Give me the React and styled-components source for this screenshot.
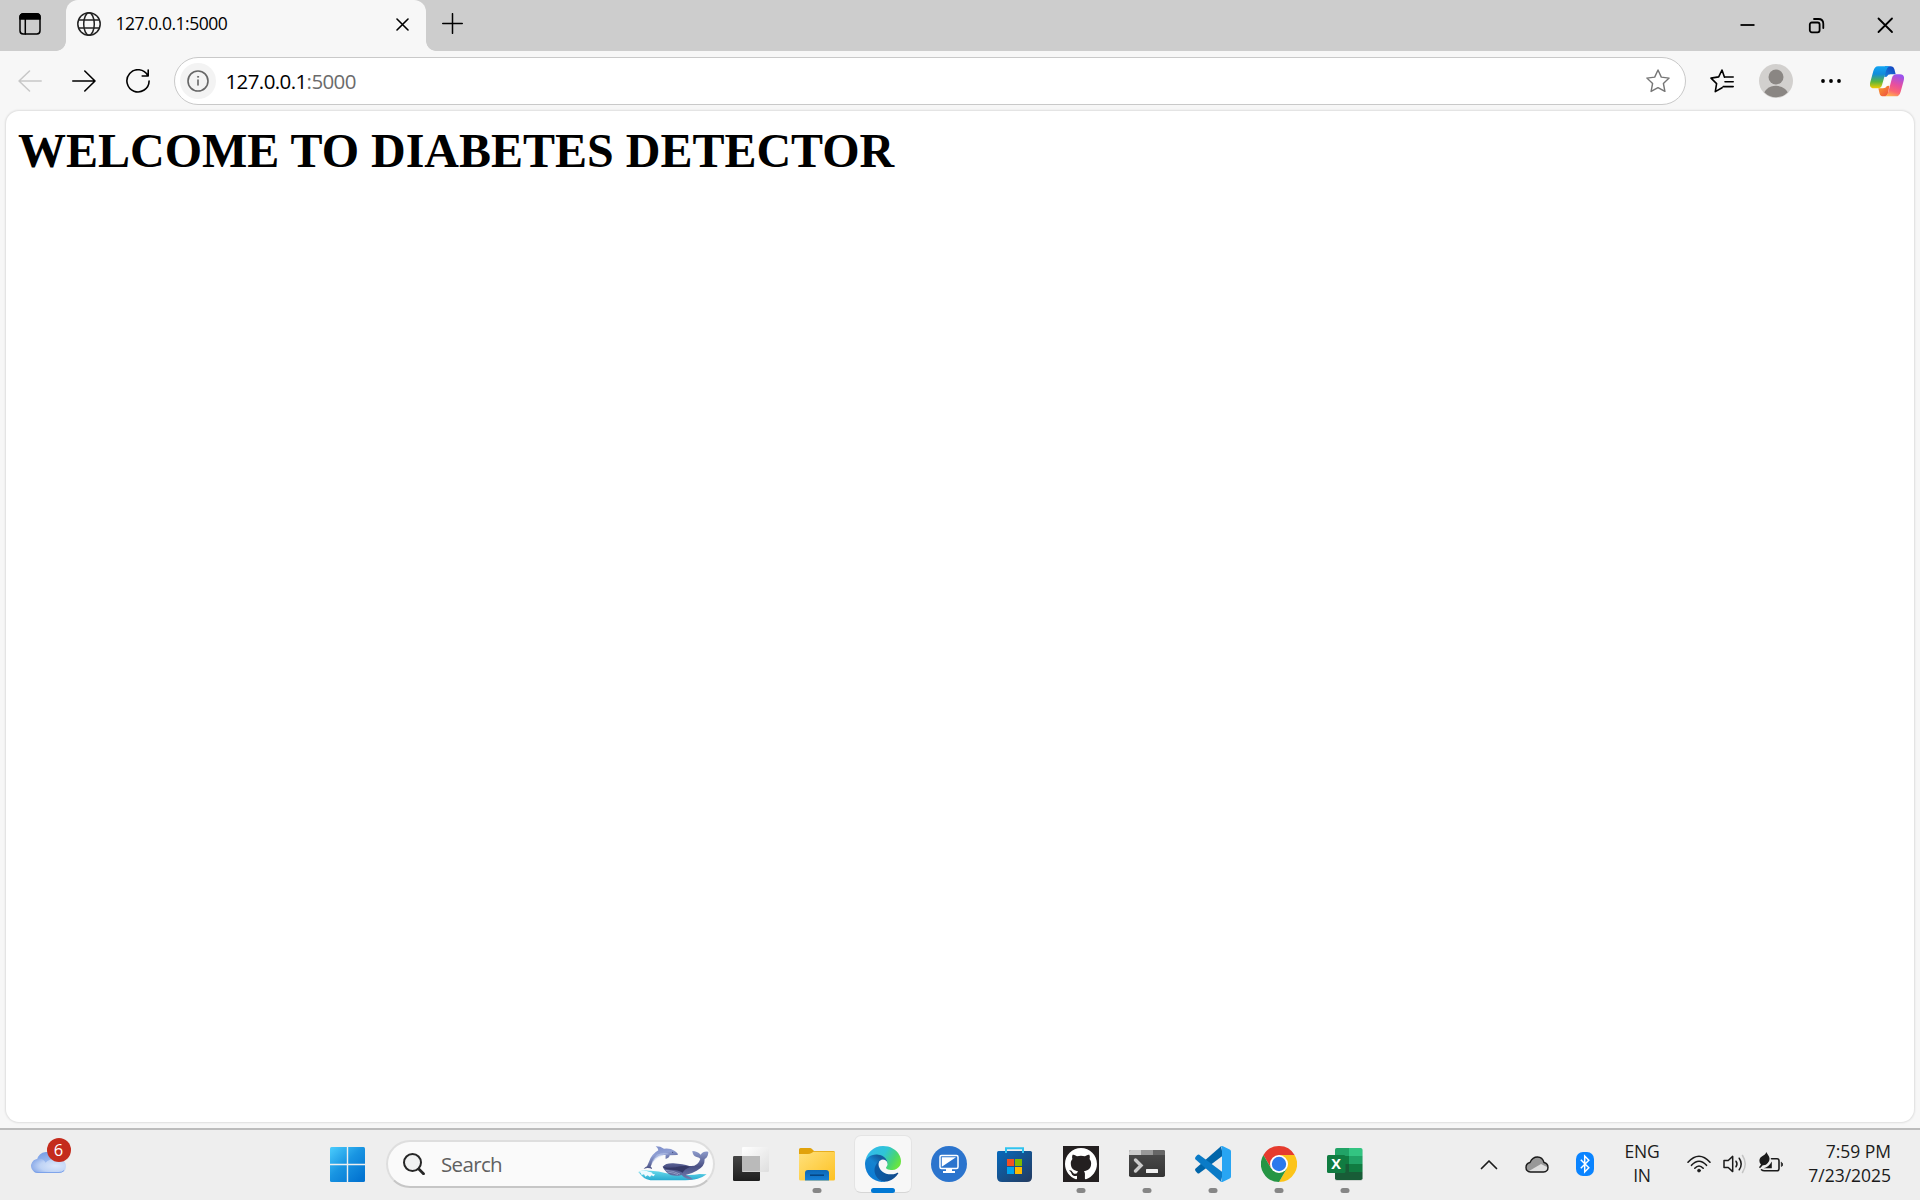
import React from "react";
import styled, { createGlobalStyle } from "styled-components";

const GlobalStyle = createGlobalStyle`
  * { box-sizing: border-box; }
  html, body { margin: 0; padding: 0; background: #f7f7f7; overflow: hidden; }
  svg { display: block; flex: none; }
`;

const Screen = styled.div`
  width: 1920px;
  height: 1200px;
  display: flex;
  flex-direction: column;
  background: #f7f7f7;
  font-family: "Open Sans", "Noto Sans", sans-serif;
  color: #000;
`;

/* ---------- Title bar ---------- */
const TitleBar = styled.header`
  height: 51px;
  flex: none;
  display: flex;
  background: #cdcdcd;
`;

const Workspace = styled.div`
  width: 66px;
  padding: 13px 0 0 19px;
`;

const Tab = styled.div`
  position: relative;
  width: 360px;
  display: flex;
  align-items: flex-start;
  padding: 12px 17px 0 11px;
  background: #f7f7f7;
  border-radius: 12px 12px 0 0;
  &::before, &::after {
    content: "";
    position: absolute;
    bottom: 0;
    width: 10px;
    height: 10px;
  }
  &::before {
    left: -10px;
    background: radial-gradient(circle at 0 0, transparent 9.5px, #f7f7f7 10.2px);
  }
  &::after {
    right: -10px;
    background: radial-gradient(circle at 100% 0, transparent 9.5px, #f7f7f7 10.2px);
  }
`;

const TabTitle = styled.span`
  flex: 1;
  margin: -1px 0 0 14.5px;
  font-size: 17.5px;
  line-height: 24px;
  letter-spacing: -0.47px;
`;

const CloseIcon = styled.div`
  margin-top: 6px;
`;

const NewTab = styled.div`
  padding: 13px 0 0 15.5px;
  flex: 1;
`;

const WindowButtons = styled.div`
  display: flex;
  padding-top: 17px;
  gap: 52px;
  margin-right: 26px;
`;

/* ---------- Toolbar ---------- */
const Toolbar = styled.nav`
  height: 60px;
  flex: none;
  display: flex;
  align-items: center;
  padding: 0 16px 0 18px;
`;

const NavButtons = styled.div`
  display: flex;
  gap: 30px;
  width: 156px;
`;

const AddressBar = styled.div`
  width: 1512px;
  height: 48px;
  display: flex;
  align-items: center;
  padding: 0 15px 0 5px;
  background: #fff;
  border: 1px solid #c9c9c9;
  border-radius: 24px;
`;

const InfoBadge = styled.div`
  width: 36px;
  height: 36px;
  display: flex;
  align-items: center;
  justify-content: center;
  border-radius: 50%;
  background: #f3f3f3;
`;

const Url = styled.span`
  flex: 1;
  margin-left: 9.5px;
  font-size: 20.5px;
  line-height: 28px;
  letter-spacing: -0.6px;
`;

const Port = styled.span`
  color: #6b6b6b;
`;

const ToolbarActions = styled.div`
  display: flex;
  align-items: center;
  margin-left: 24px;
  & > :nth-child(2) { margin-left: 25px; }
  & > :nth-child(3) { margin-left: 28px; }
  & > :nth-child(4) { margin-left: 29px; }
`;

/* ---------- Page ---------- */
const PageFrame = styled.div`
  height: 1017px;
  flex: none;
  padding: 0 6px 5px;
`;

const Page = styled.main`
  height: 1011px;
  padding: 12px;
  background: #fff;
  border-radius: 13px;
  box-shadow: 0 0 2px 1px rgba(0, 0, 0, 0.1);
`;

const Heading = styled.h1`
  margin: 0;
  font: bold 48px/55px "Liberation Serif", "Times New Roman", serif;
`;

/* ---------- Taskbar ---------- */
const Taskbar = styled.footer`
  height: 72px;
  flex: none;
  display: flex;
  background: #eee;
  box-shadow: inset 0 2px 0 #bcbcbc;
`;

const WeatherArea = styled.div`
  position: relative;
  width: 314px;
  padding: 21.5px 0 0 30px;
`;

const Badge = styled.span`
  position: absolute;
  left: 46.5px;
  top: 10px;
  width: 24px;
  height: 24px;
  border-radius: 50%;
  background: #c42b1c;
  color: #fff;
  font-size: 16.5px;
  line-height: 24px;
  text-align: center;
`;

const Slot = styled.div`
  position: relative;
  width: ${(p) => p.$width || 66}px;
  height: 72px;
  flex: none;
  display: flex;
  align-items: center;
  justify-content: center;
  &::after {
    content: "";
    display: ${(p) => (p.$mark ? "block" : "none")};
    position: absolute;
    bottom: 7px;
    left: 50%;
    width: ${(p) => (p.$mark === "active" ? 24 : 9)}px;
    height: 5px;
    transform: translateX(-50%);
    border-radius: 3px;
    background: ${(p) => (p.$mark === "active" ? "#0078d4" : "#868686")};
  }
`;

const ActiveTile = styled.div`
  width: 58px;
  height: 58px;
  display: flex;
  align-items: center;
  justify-content: center;
  background: #f7f7f7;
  border: 1px solid #e4e4e4;
  border-bottom-color: #d6d6d6;
  border-radius: 7px;
`;

const SearchBox = styled.div`
  width: 329px;
  height: 48px;
  margin: 12px 3.5px 0 5.5px;
  display: flex;
  align-items: center;
  padding: 0 3px 0 15.5px;
  background: #fafafa;
  border: 2px solid #dedede;
  border-bottom-color: #c6c6c6;
  border-radius: 24px;
`;

const SearchLabel = styled.span`
  flex: 1;
  margin-left: 16px;
  color: #606060;
  font-size: 20.5px;
  line-height: 28px;
  letter-spacing: -0.65px;
`;

const Spacer = styled.div`
  flex: 1;
`;

const TrayText = styled.div`
  padding-bottom: 1px;
  color: #1b1b1b;
  font-size: 17.5px;
  line-height: 23.5px;
  letter-spacing: ${(p) => p.$tracking}px;
  text-align: ${(p) => p.$align || "center"};
`;

const Status = styled.div`
  display: flex;
  align-items: center;
  gap: 12px;
  padding-left: 12px;
`;

const Clock = styled.div`
  width: 137px;
  display: flex;
  align-items: center;
  justify-content: flex-end;
  padding-right: 29px;
`;

/* ---------- Icons ---------- */
const Icon = ({ w = 24, h = w, box, sw = 1.7, color = "#111", children }) => (
  <svg width={w} height={h} viewBox={box || `0 0 ${w} ${h}`} fill="none" stroke={color}
    strokeWidth={sw} strokeLinecap="round" strokeLinejoin="round">
    {children}
  </svg>
);

const WorkspaceIcon = () => (
  <Icon w={22} color="#000" sw={1.5}>
    <rect x="1" y="1" width="20" height="20" rx="3.2" />
    <path d="M1 6V4a3.2 3.2 0 0 1 3.2-3.2h13.6A3.2 3.2 0 0 1 21 4v2z" fill="#000" />
    <path d="M6.3 6v15" />
  </Icon>
);

const GlobeIcon = () => (
  <Icon sw={1.5} color="#222">
    <circle cx="12" cy="12" r="11.2" />
    <ellipse cx="12" cy="12" rx="5.3" ry="11.2" />
    <path d="M2 8h20M2 16h20" />
  </Icon>
);

const BackIcon = () => (
  <Icon color="#c7c7c7" sw={1.5}><path d="M23.2 12H1M11.5 2L1 12l10.5 10" /></Icon>
);
const ForwardIcon = () => (
  <Icon color="#000" sw={1.6}><path d="M.8 12H23M12.8 2L23 12 12.8 22" /></Icon>
);
const ReloadIcon = () => (
  <Icon color="#000" sw={1.6}><path d="M21.8 6.6A11.1 11.1 0 1 0 23.1 12M22.2 1v6h-6" /></Icon>
);

const InfoIcon = () => (
  <Icon w={22} color="#666" sw={1.6}>
    <circle cx="11" cy="11" r="10" />
    <path d="M11 10v5" />
    <circle cx="11" cy="6.8" r=".6" fill="#666" strokeWidth=".8" />
  </Icon>
);

const StarIcon = () => (
  <Icon color="#767676" sw={1.4}>
    <path d="M12 1l3.3 7.1 7.8 1-5.7 5.4 1.5 7.9L12 18.6l-6.9 3.8 1.5-7.9L.9 9.1l7.8-1z" />
  </Icon>
);

const FavoritesIcon = () => (
  <Icon color="#000" sw={1.6}>
    <path d="M15 8.1h-.6L12 1 8.7 7.9 1 9.1l5.6 5.5L5.3 22.6l6.8-3.9M15 8h8.2M15 12.8h8.2M13.2 17.6h10" />
  </Icon>
);

const AvatarIcon = () => (
  <svg width="34" height="34" viewBox="0 0 34 34">
    <defs><clipPath id="avatarClip"><circle cx="17" cy="17" r="16.2" /></clipPath></defs>
    <circle cx="17" cy="17" r="17" fill="#d2d0ce" />
    <g fill="#8a8683" clipPath="url(#avatarClip)">
      <circle cx="17" cy="13" r="7.5" />
      <ellipse cx="17" cy="33" rx="12.8" ry="11.2" />
    </g>
  </svg>
);

const DotsIcon = () => (
  <svg width="20" height="4" viewBox="0 0 20 4">
    <circle cx="2" cy="2" r="1.9" /><circle cx="10" cy="2" r="1.9" /><circle cx="18" cy="2" r="1.9" />
  </svg>
);

const CopilotIcon = () => (
  <svg width="34" height="31" viewBox="30 29 102 93">
    <defs>
      <linearGradient id="cpLeft" x1="0" y1="0" x2="0" y2="1">
        <stop offset="0" stopColor="#12a5f3" /><stop offset=".35" stopColor="#118cdb" />
        <stop offset=".7" stopColor="#5cb63c" /><stop offset="1" stopColor="#f5cb00" />
      </linearGradient>
      <linearGradient id="cpRight" x1=".6" y1="0" x2=".3" y2="1">
        <stop offset="0" stopColor="#9a52ee" /><stop offset=".45" stopColor="#e84f9e" />
        <stop offset=".75" stopColor="#fb6672" /><stop offset="1" stopColor="#ffb04e" />
      </linearGradient>
      <linearGradient id="cpTop" x1="0" y1="1" x2="1" y2="0">
        <stop offset="0" stopColor="#1685dc" /><stop offset="1" stopColor="#143dbe" />
      </linearGradient>
      <linearGradient id="cpBottom" x1="0" y1="0" x2="1" y2="1">
        <stop offset="0" stopColor="#f9a02b" /><stop offset="1" stopColor="#ee4a43" />
      </linearGradient>
    </defs>
    <path d="M76 54L79 63 66 96H78L85 85 97 54Z" fill="#fbfbfb" />
    <path d="M75 30H93Q101 30 103 38L107 54H92Q84 54 80 61L73 62Z" fill="url(#cpTop)" />
    <path d="M55 96H69Q77 96 81 89L88 88 84 113Q81 120 75 120H70Q61 120 59 112Z" fill="url(#cpBottom)" />
    <path d="M54 30H88Q81 33 78 44L66 86Q63 96 54 96H42Q26 96 31 77L40 44Q44 30 54 30Z" fill="url(#cpLeft)" />
    <path d="M108 120H75Q82 117 85 106L96 65Q99 54 109 54H120Q136 55 131 73L122 106Q118 120 108 120Z" fill="url(#cpRight)" />
  </svg>
);

const CloudIcon = () => (
  <svg width="36" height="23" viewBox="0 0 36 23">
    <defs>
      <linearGradient id="cloudBack" x1="0" y1="0" x2=".4" y2="1">
        <stop offset="0" stopColor="#7099e5" /><stop offset="1" stopColor="#c3d8f8" />
      </linearGradient>
      <radialGradient id="cloudFront" cx=".7" cy=".5" r=".8">
        <stop offset="0" stopColor="#dbe8fb" /><stop offset=".55" stopColor="#bfd3f5" /><stop offset="1" stopColor="#7c9fe5" />
      </radialGradient>
    </defs>
    <path d="M7 10a10 10 0 0 1 19-2 7.5 7.5 0 0 1 3 15H13z" fill="url(#cloudBack)" />
    <path d="M8 23a7 7 0 0 1-2-13.7c5-1.3 8 .2 9.5 3.4C18 10 22 8.5 28 8.8c4.5.5 8 3 8 7.2 0 5-3 7-7 7z" fill="url(#cloudFront)" />
    <path d="M4 21.5Q6 22.5 8 22.5h21q3 0 5-2" fill="none" stroke="#789fe9" strokeWidth=".9" />
  </svg>
);

const WindowsIcon = () => (
  <svg width="35" height="35" viewBox="0 0 35 35">
    <defs>
      <linearGradient id="win" gradientUnits="userSpaceOnUse" x1="0" y1="0" x2="30" y2="33">
        <stop offset="0" stopColor="#4bcdfd" /><stop offset=".5" stopColor="#1995e2" /><stop offset="1" stopColor="#0374d1" />
      </linearGradient>
    </defs>
    <g fill="url(#win)">
      <path d="M1.5 0H16.8V16.8H0V1.5Q0 0 1.5 0z" /><path d="M18.2 0H33.5Q35 0 35 1.5V16.8H18.2z" />
      <path d="M0 18.2H16.8V35H1.5Q0 35 0 33.5z" /><path d="M18.2 18.2H35V33.5Q35 35 33.5 35H18.2z" />
    </g>
  </svg>
);

const SearchIcon = () => (
  <svg width="22" height="22" viewBox="0 0 22 22" fill="none" stroke="#262626">
    <circle cx="9.5" cy="9.5" r="8.5" strokeWidth="2" fill="#f0f1f1" />
    <path d="M15.8 16l4.7 4.7" strokeWidth="2.8" strokeLinecap="round" />
  </svg>
);

const DolphinArt = () => (
  <svg width="72" height="38" viewBox="20 26 216 114">
    <defs>
      <linearGradient id="dolphin" x1="0" y1="0" x2=".4" y2="1">
        <stop offset="0" stopColor="#7585c4" /><stop offset=".45" stopColor="#8f9fd4" /><stop offset="1" stopColor="#3b3f71" />
      </linearGradient>
      <linearGradient id="whale" x1="0" y1="0" x2="0" y2="1">
        <stop offset="0" stopColor="#8f9dcd" /><stop offset=".55" stopColor="#4b5185" /><stop offset="1" stopColor="#717eb2" />
      </linearGradient>
      <linearGradient id="sea" x1="0" y1="0" x2="0" y2="1">
        <stop offset="0" stopColor="#6bdcec" /><stop offset="1" stopColor="#27a9cf" />
      </linearGradient>
    </defs>
    <path d="M21 107Q35 99 53 103Q80 102 105 111L158 115Q180 117 205 113L226 114Q215 123 199 127Q180 132 145 132H70Q42 132 31 118Z" fill="url(#sea)" />
    <path d="M22 107Q36 99 52 106L60 108 65 113 71 114 67 120 60 117 56 122 49 117 42 121 38 114 31 116 28 109Z" fill="#edfaff" />
    <path d="M47 90Q41 92 37 98Q45 95 49 95Q57 95 62 98Q63 94 58 91Q61 78 72 66Q84 54 103 56Q102 63 103 68L111 64Q115 61 115 57L138 56Q142 55 138 51Q135 46 129 43Q118 35 98 37Q88 30 73 30Q80 34 81 42Q60 54 53 76Z" fill="url(#dolphin)" />
    <path d="M77 55Q98 46 116 54Q101 53 86 61Q68 69 60 86Q60 72 77 55Z" fill="#c6d3f3" opacity=".5" />
    <circle cx="124" cy="48" r="1.5" fill="#232b55" />
    <path d="M94 91Q103 80 126 81Q155 83 174 89Q199 92 207 68Q205 63 196 62Q184 59 183 44Q198 44 208 55Q216 43 231 46Q231 63 220 68Q221 91 196 103Q183 111 163 116Q179 122 185 129Q166 132 151 116Q122 124 105 107Q97 99 94 91Z" fill="url(#whale)" />
    <path d="M94 91Q119 97 147 90Q163 87 177 91Q158 99 154 109Q140 100 119 100Q104 101 94 91Z" fill="#343866" />
    <path d="M103 102Q125 103 146 113M108 107Q126 109 140 115" stroke="#a6b2d4" strokeWidth="2" fill="none" />
  </svg>
);

const TaskViewIcon = () => (
  <svg width="36" height="36" viewBox="0 0 36 36">
    <defs>
      <linearGradient id="tvDark" x1="0" y1="0" x2="0" y2="1"><stop offset="0" stopColor="#454545" /><stop offset="1" stopColor="#1e1e1e" /></linearGradient>
      <linearGradient id="tvLight" x1="0" y1="0" x2="1" y2="1"><stop offset="0" stopColor="#fff" /><stop offset="1" stopColor="#dedede" /></linearGradient>
    </defs>
    <rect x="0" y="10" width="27" height="25" rx="1.3" fill="url(#tvDark)" />
    <rect x="9" y="1" width="27" height="25" rx="1.3" fill="url(#tvLight)" />
    <rect x="9" y="10" width="18" height="15.5" fill="#bababa" />
  </svg>
);

const FolderIcon = () => (
  <svg width="36" height="36" viewBox="0 0 36 36">
    <defs>
      <linearGradient id="folder" x1="0" y1="0" x2="1" y2="1"><stop offset="0" stopColor="#ffe17c" /><stop offset="1" stopColor="#fdc122" /></linearGradient>
      <linearGradient id="folderTray" x1="0" y1="0" x2="0" y2="1"><stop offset="0" stopColor="#0d67b5" /><stop offset="1" stopColor="#1681d8" /></linearGradient>
    </defs>
    <path d="M0 3.5Q0 2 1.5 2H11Q12 2 13 3L15 5H34.5Q36 5 36 6.5V12H0z" fill="#e1a20b" />
    <path d="M0 8H9Q11 8 12.5 7L14.5 5.7H35Q36 5.7 36 7V33Q36 34.5 34.5 34.5H1.5Q0 34.5 0 33z" fill="url(#folder)" />
    <path d="M6 34.5V27Q6 24 9 24H27Q30 24 30 27V34.5z" fill="url(#folderTray)" />
    <path d="M11 29.2H25" stroke="#07437f" strokeWidth="1.5" />
  </svg>
);

const EdgeIcon = () => (
  <svg width="36" height="36" viewBox="0 0 256 256">
    <defs>
      <linearGradient id="edgeDark" x1=".2" y1=".5" x2="1" y2=".5"><stop offset="0" stopColor="#0c59a4" /><stop offset="1" stopColor="#114a8b" /></linearGradient>
      <linearGradient id="edgeBlue" x1=".7" y1=".2" x2=".2" y2="1"><stop offset="0" stopColor="#145c9e" /><stop offset=".3" stopColor="#1583d0" /><stop offset="1" stopColor="#0a78d4" /></linearGradient>
      <linearGradient id="edgeGreen" x1="0" y1=".2" x2="1" y2=".6"><stop offset="0" stopColor="#35b9ef" /><stop offset=".5" stopColor="#2fc4d6" /><stop offset=".8" stopColor="#48d572" /><stop offset="1" stopColor="#69e53f" /></linearGradient>
    </defs>
    <path fill="url(#edgeDark)" d="M231 190.5a93.7 93.7 0 0 1-10.5 4.7 101.9 101.9 0 0 1-35.9 6.5c-47.3 0-88.5-32.6-88.5-74.3A31.5 31.5 0 0 1 112.5 100c-42.8 1.8-53.8 46.4-53.8 72.5 0 73.9 68.1 81.4 82.8 81.4 7.9 0 19.8-2.3 27-4.6l1.3-.4a128.3 128.3 0 0 0 66.6-52.8 4 4 0 0 0-5.4-5.6z" />
    <path fill="url(#edgeBlue)" d="M105.7 241.4a79.2 79.2 0 0 1-22.7-21.3 80.7 80.7 0 0 1 29.5-120c3.1-1.5 8.5-4.1 15.5-4a32.4 32.4 0 0 1 25.7 13 31.9 31.9 0 0 1 6.3 18.7c0-.2 24.5-79.6-80-79.6-43.9 0-80 41.6-80 78.2a130.2 130.2 0 0 0 12.1 56 128 128 0 0 0 156.4 67 75.5 75.5 0 0 1-62.8-8z" />
    <path fill="url(#edgeGreen)" d="M152.3 148.9c-.8 1-3.3 2.5-3.3 5.6 0 2.6 1.7 5.1 4.7 7.2 14.4 10 41.5 8.7 41.6 8.7a59.6 59.6 0 0 0 30.3-8.4A61.4 61.4 0 0 0 256 109.1c.3-22.4-8-37.3-11.3-43.9C223.5 23.8 177.7 0 128 0A128 128 0 0 0 0 126.2c.5-36.5 36.8-66 80-66 3.5 0 23.5.3 42 10 16.3 8.6 24.9 18.9 30.9 29.2 6.2 10.7 7.3 24.1 7.3 29.5s-2.7 13.4-7.9 20z" />
  </svg>
);

const RemoteIcon = () => (
  <svg width="36" height="36" viewBox="0 0 36 36">
    <circle cx="18" cy="18" r="18" fill="#2b74cd" />
    <rect x="9" y="9.5" width="18" height="13" rx="1.5" fill="none" stroke="#fff" strokeWidth="1.5" />
    <path d="M10.8 11.3H25L10.8 20.8zM15 22.5h6v2.5h3v2H12v-2h3z" fill="#fff" />
  </svg>
);

const StoreIcon = () => (
  <svg width="36" height="36" viewBox="0 0 36 36">
    <defs><linearGradient id="store" x1="0" y1="0" x2="1" y2="1"><stop offset="0" stopColor="#0669bc" /><stop offset="1" stopColor="#243a5f" /></linearGradient></defs>
    <path d="M0 6.5Q0 5 1.5 5H33.5Q35 5 35 6.5V31Q35 36 30 36H5Q0 36 0 31z" fill="url(#store)" />
    <path d="M9 7V2.3H26V7" fill="none" stroke="#30c3ef" strokeWidth="2" />
    <rect x="10" y="13" width="7" height="7" fill="#f25022" /><rect x="18" y="13" width="7" height="7" fill="#7fba00" />
    <rect x="10" y="21" width="7" height="7" fill="#00a4ef" /><rect x="18" y="21" width="7" height="7" fill="#ffb900" />
  </svg>
);

const GitHubIcon = () => (
  <svg width="36" height="36" viewBox="0 0 36 36">
    <rect width="36" height="36" fill="#231f20" />
    <path transform="translate(2 1.7) scale(1.333)" fill="#fff" d="M12 .297c-6.63 0-12 5.373-12 12 0 5.303 3.438 9.8 8.205 11.385.6.113.82-.258.82-.577 0-.285-.01-1.04-.015-2.04-3.338.724-4.042-1.61-4.042-1.61C4.422 18.07 3.633 17.7 3.633 17.7c-1.087-.744.084-.729.084-.729 1.205.084 1.838 1.236 1.838 1.236 1.07 1.835 2.809 1.305 3.495.998.108-.776.417-1.305.76-1.605-2.665-.3-5.466-1.332-5.466-5.93 0-1.31.465-2.38 1.235-3.22-.135-.303-.54-1.523.105-3.176 0 0 1.005-.322 3.3 1.23.96-.267 1.98-.399 3-.405 1.02.006 2.04.138 3 .405 2.28-1.552 3.285-1.23 3.285-1.23.645 1.653.24 2.873.12 3.176.765.84 1.23 1.91 1.23 3.22 0 4.61-2.805 5.625-5.475 5.92.42.36.81 1.096.81 2.22 0 1.606-.015 2.896-.015 3.286 0 .315.21.69.825.57C20.565 22.092 24 17.592 24 12.297c0-6.627-5.373-12-12-12" />
  </svg>
);

const TerminalIcon = () => (
  <svg width="36" height="36" viewBox="0 0 36 36">
    <defs>
      <clipPath id="termClip"><rect y="4" width="36" height="27" rx="1.8" /></clipPath>
      <linearGradient id="term" x1="0" y1="0" x2="0" y2="1"><stop offset="0" stopColor="#4d4d4d" /><stop offset="1" stopColor="#343434" /></linearGradient>
    </defs>
    <g clipPath="url(#termClip)">
      <rect y="4" width="36" height="27" fill="url(#term)" />
      <rect y="4" width="12" height="5" fill="#ccc" /><rect x="12" y="4" width="12" height="5" fill="#999" /><rect x="24" y="4" width="12" height="5" fill="#666" />
    </g>
    <path d="M6.5 14l5.5 5.5-5.5 5.5" fill="none" stroke="#ccc" strokeWidth="3.4" strokeLinecap="round" />
    <rect x="17" y="23" width="12" height="4" rx=".6" fill="#f0f0f0" />
  </svg>
);

const CodeIcon = () => (
  <svg width="36" height="36" viewBox="0 0 36 36">
    <path d="M.6 22.5L26 .3 28 9.5 4.3 27.3Q3.3 28 2.3 27L.5 25Q-.4 23.6.6 22.5z" fill="#0065a9" />
    <path d="M.6 13.5L26 35.7 28 26.5 4.3 8.7Q3.3 8 2.3 9L.5 11Q-.4 12.4.6 13.5z" fill="#0a7bc7" />
    <path d="M25.5.8Q26.5-.3 28 .3L34.7 3.5Q36 4.2 36 5.6V30.4Q36 31.8 34.7 32.5L28 35.7Q26.5 36.3 25.5 35.2Q27 35.5 27 33.5V2.5Q27 .6 25.5.8z" fill="#28a5f3" />
  </svg>
);

const ChromeIcon = () => (
  <svg width="36" height="36" viewBox="0 0 36 36">
    <path d="M2.41 9A18 18 0 0 1 33.59 9H18L10.21 22.5z" fill="#e53b2e" />
    <path d="M33.59 9A18 18 0 0 1 18 36L25.79 22.5 18 9z" fill="#fcc419" />
    <path d="M18 36A18 18 0 0 1 2.41 9L10.21 22.5H25.79z" fill="#259544" />
    <circle cx="18" cy="18" r="9" fill="#fff" /><circle cx="18" cy="18" r="7.2" fill="#2b79ed" />
  </svg>
);

const ExcelIcon = () => (
  <svg width="36" height="36" viewBox="0 0 36 36">
    <defs><clipPath id="xlClip"><rect x="8" y="2" width="27.5" height="32" rx="1.8" /></clipPath></defs>
    <rect x="8" y="3" width="27.5" height="32" rx="1.8" fill="#cfd4d1" />
    <g clipPath="url(#xlClip)">
      <rect x="8" y="2" width="14" height="8" fill="#21a366" /><rect x="22" y="2" width="14" height="8" fill="#33c481" />
      <rect x="8" y="10" width="14" height="8" fill="#107c41" /><rect x="22" y="10" width="14" height="8" fill="#21a366" />
      <rect x="8" y="18" width="14" height="16" fill="#185c37" /><rect x="22" y="18" width="14" height="8" fill="#107c41" />
      <rect x="22" y="26" width="14" height="8" fill="#185c37" />
    </g>
    <rect x="0" y="9" width="18.5" height="18" rx="1.6" fill="#107c41" />
    <text x="9.2" y="23.2" fill="#fff" textAnchor="middle" fontFamily="Open Sans, sans-serif" fontWeight="700" fontSize="14.5">X</text>
  </svg>
);

const OneDriveIcon = () => (
  <svg width="24" height="17" viewBox="0 0 24 17">
    <path d="M5.5 16Q1 15.5 1 11.5 1 7.5 5 6.5 7.5 1 12.5 1T19 6.5Q23 7.5 23 11.5T18.5 16z" fill="#989898" />
    <path d="M4 15l12-7 6 3 1 3-3 2H5.5z" fill="#dedede" />
    <path d="M5.5 16Q1 15.5 1 11.5 1 7.5 5 6.5 7.5 1 12.5 1T19 6.5Q23 7.5 23 11.5T18.5 16z" fill="none" stroke="#191919" strokeWidth="1.4" />
  </svg>
);

const BluetoothIcon = () => (
  <svg width="18" height="24" viewBox="0 0 18 24">
    <rect width="18" height="24" rx="7" fill="#0a84ff" />
    <path d="M4.8 7.7l8 8L8.7 20V4l4.1 4.2-8 8" fill="none" stroke="#fff" strokeWidth="1.5" />
  </svg>
);

const WifiIcon = () => (
  <Icon w={24} h={18} color="#1b1b1b" sw={1.6}>
    <path d="M1 7.2Q12-4.6 23 7.2M4.5 10.3Q12 2.3 19.5 10.3M7.8 13.2Q12 8.7 16.2 13.2" />
    <circle cx="12" cy="15.6" r="1.5" fill="#1b1b1b" strokeWidth=".6" />
  </Icon>
);

const SpeakerIcon = () => (
  <Icon w={24} h={20} color="#1b1b1b" sw={1.5}>
    <path d="M1 6.5h4.2L9.7 2.4v15.2L5.2 13.5H1zM13 7.2q2 2.8 0 5.6M16.2 4.2q4 5.8 0 11.6" />
    <path d="M19.5 1.5q5.5 8.5 0 17" stroke="#c4c4c4" />
  </Icon>
);

const BatteryIcon = () => (
  <Icon w={24} h={24} color="#1b1b1b" sw={1.6}>
    <path d="M12.500 6.800h5.500q2 0 2 2v8q0 2-2 2H5.500q-2 0-3-1" />
    <path d="M22.300 10.500v4q1.500-.3 1.500-2t-1.500-2z" fill="#1b1b1b" strokeWidth=".6" />
    <path d="M7.200 0Q8.500 2 10 4.500 11.500 8 8.800 11 7 13.500 3.800 13.200L1 16.200 0 15.200 2 12.500Q-1 9 1.500 5.500 3.500 3.800 5.500 2.800 7 1.800 7.200 0z" fill="#1b1b1b" stroke="none" />
    <path d="M4.500 16.200Q9.500 15.500 12.800 9.500V16.200z" fill="#1b1b1b" stroke="none" />
  </Icon>
);

const apps = [
  { key: "taskview", icon: <TaskViewIcon /> },
  { key: "files", icon: <FolderIcon />, mark: "open" },
  { key: "edge", icon: <ActiveTile><EdgeIcon /></ActiveTile>, mark: "active" },
  { key: "remote", icon: <RemoteIcon /> },
  { key: "store", icon: <StoreIcon /> },
  { key: "github", icon: <GitHubIcon />, mark: "open" },
  { key: "terminal", icon: <TerminalIcon />, mark: "open" },
  { key: "code", icon: <CodeIcon />, mark: "open" },
  { key: "chrome", icon: <ChromeIcon />, mark: "open" },
  { key: "excel", icon: <ExcelIcon />, mark: "open" },
];

export default function App() {
  return (
    <Screen>
      <GlobalStyle />
      <TitleBar>
        <Workspace><WorkspaceIcon /></Workspace>
        <Tab>
          <GlobeIcon />
          <TabTitle>127.0.0.1:5000</TabTitle>
          <CloseIcon><Icon w={13} color="#000" sw={1.6}><path d="M1 1l11 11M12 1L1 12" /></Icon></CloseIcon>
        </Tab>
        <NewTab><Icon w={21} color="#000" sw={1.5}><path d="M10.5.7v19.6M.7 10.5h19.6" /></Icon></NewTab>
        <WindowButtons>
          <Icon w={17} color="#000" sw={1.8}><path d="M1.5 8h14" strokeLinecap="butt" /></Icon>
          <Icon w={17} color="#000" sw={1.8}>
            <rect x="1.8" y="5.5" width="9.8" height="9.8" rx="2" />
            <path d="M6 2h4.5q4.8 0 4.8 4.8V11" />
          </Icon>
          <Icon w={17} color="#000" sw={1.8}><path d="M1.5 1.500l13.500 13.500M15 1.500L1.500 15" /></Icon>
        </WindowButtons>
      </TitleBar>

      <Toolbar>
        <NavButtons><BackIcon /><ForwardIcon /><ReloadIcon /></NavButtons>
        <AddressBar>
          <InfoBadge><InfoIcon /></InfoBadge>
          <Url>127.0.0.1<Port>:5000</Port></Url>
          <StarIcon />
        </AddressBar>
        <ToolbarActions><FavoritesIcon /><AvatarIcon /><DotsIcon /><CopilotIcon /></ToolbarActions>
      </Toolbar>

      <PageFrame>
        <Page><Heading>WELCOME TO DIABETES DETECTOR</Heading></Page>
      </PageFrame>

      <Taskbar>
        <WeatherArea><CloudIcon /><Badge>6</Badge></WeatherArea>
        <Slot><WindowsIcon /></Slot>
        <SearchBox>
          <SearchIcon />
          <SearchLabel>Search</SearchLabel>
          <DolphinArt />
        </SearchBox>
        {apps.map((a) => <Slot key={a.key} $mark={a.mark}>{a.icon}</Slot>)}
        <Spacer />
        <Slot $width={48}><Icon w={18} h={11} color="#1b1b1b"><path d="M1.5 9.5L9 2l7.500 7.500" /></Icon></Slot>
        <Slot $width={48}><OneDriveIcon /></Slot>
        <Slot $width={48}><BluetoothIcon /></Slot>
        <Slot $width={66}><TrayText $tracking={-0.2}>ENG<br />IN</TrayText></Slot>
        <Status><WifiIcon /><SpeakerIcon /><BatteryIcon /></Status>
        <Clock><TrayText $tracking={-0.02} $align="right">7:59 PM<br />7/23/2025</TrayText></Clock>
      </Taskbar>
    </Screen>
  );
}
